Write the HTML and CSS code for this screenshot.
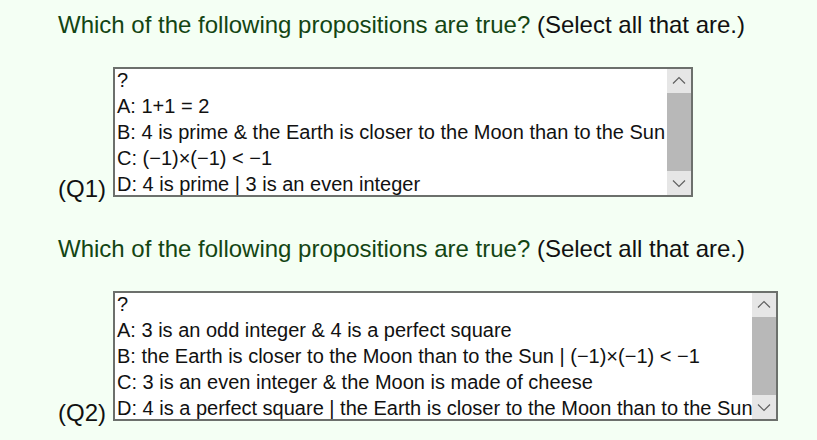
FILE: index.html
```html
<!DOCTYPE html>
<html lang="en">
<head>
    <meta charset="UTF-8">
    <meta name="viewport" content="width=device-width, initial-scale=1.0">
    <title>Propositions Quiz</title>
    <link rel="stylesheet" href="styles.css">
</head>
<body>
    <div class="quiz">
        <p class="question"><span class="prompt">Which of the following propositions are true?</span> (Select all that are.)</p>
        <div class="answer-row">
            <span class="qlabel">(Q1)</span>
            <div class="listbox q1" role="listbox" aria-multiselectable="true">
                <div class="options">
                    <div class="option" role="option">?</div>
                    <div class="option" role="option">A: 1+1 = 2</div>
                    <div class="option" role="option">B: 4 is prime &amp; the Earth is closer to the Moon than to the Sun</div>
                    <div class="option" role="option">C: (&minus;1)&times;(&minus;1) &lt; &minus;1</div>
                    <div class="option" role="option">D: 4 is prime | 3 is an even integer</div>
                </div>
                <div class="scrollbar">
                    <div class="sb-btn"><svg width="24" height="24" viewBox="0 0 24 24"><polyline points="6,14.5 12,8.5 18,14.5" /></svg></div>
                    <div class="sb-track"><div class="sb-thumb"></div></div>
                    <div class="sb-btn"><svg width="24" height="24" viewBox="0 0 24 24"><polyline points="6,9.5 12,15.5 18,9.5" /></svg></div>
                </div>
            </div>
        </div>

        <p class="question second"><span class="prompt">Which of the following propositions are true?</span> (Select all that are.)</p>
        <div class="answer-row">
            <span class="qlabel">(Q2)</span>
            <div class="listbox q2" role="listbox" aria-multiselectable="true">
                <div class="options">
                    <div class="option" role="option">?</div>
                    <div class="option" role="option">A: 3 is an odd integer &amp; 4 is a perfect square</div>
                    <div class="option" role="option">B: the Earth is closer to the Moon than to the Sun | (&minus;1)&times;(&minus;1) &lt; &minus;1</div>
                    <div class="option" role="option">C: 3 is an even integer &amp; the Moon is made of cheese</div>
                    <div class="option" role="option">D: 4 is a perfect square | the Earth is closer to the Moon than to the Sun</div>
                </div>
                <div class="scrollbar">
                    <div class="sb-btn"><svg width="24" height="24" viewBox="0 0 24 24"><polyline points="6,14.5 12,8.5 18,14.5" /></svg></div>
                    <div class="sb-track"><div class="sb-thumb"></div></div>
                    <div class="sb-btn"><svg width="24" height="24" viewBox="0 0 24 24"><polyline points="6,9.5 12,15.5 18,9.5" /></svg></div>
                </div>
            </div>
        </div>
    </div>
</body>
</html>
```

FILE: styles.css
```css
* { margin: 0; padding: 0; box-sizing: border-box; }

body {
    font-family: "Liberation Sans", Arial, sans-serif;
    background: #f4fff4;
    color: #111;
}

.quiz {
    padding: 11px 0 19px 58px;
}

.question {
    font-size: 24px;
    color: #111;
    margin-bottom: 28px;
}

.question.second {
    margin-top: 38px;
}

.prompt {
    color: #134513;
}

.answer-row {
    display: flex;
    align-items: flex-end;
}

.qlabel {
    font-size: 24px;
    margin-right: 7px;
    margin-bottom: -6px;
}

.listbox {
    display: flex;
    height: 130px;
    border: 2px solid #6c706c;
    background: white;
}

.listbox.q1 { width: 580px; }
.listbox.q2 { width: 665px; }

.options {
    flex: 1;
    overflow: hidden;
}

.option {
    font-size: 20px;
    line-height: 23px;
    padding: 0 2px 3px;
    color: #111;
    white-space: nowrap;
}

.scrollbar {
    width: 24px;
    display: flex;
    flex-direction: column;
    background: #f0f0f0;
}

.sb-btn {
    height: 24px;
    background: #e6e6e6;
}

.sb-btn svg {
    display: block;
    fill: none;
    stroke: #606060;
    stroke-width: 1.2;
}

.sb-track {
    flex: 1;
    display: flex;
}

.sb-thumb {
    flex: 1;
    background: #b8b8b8;
}
```
